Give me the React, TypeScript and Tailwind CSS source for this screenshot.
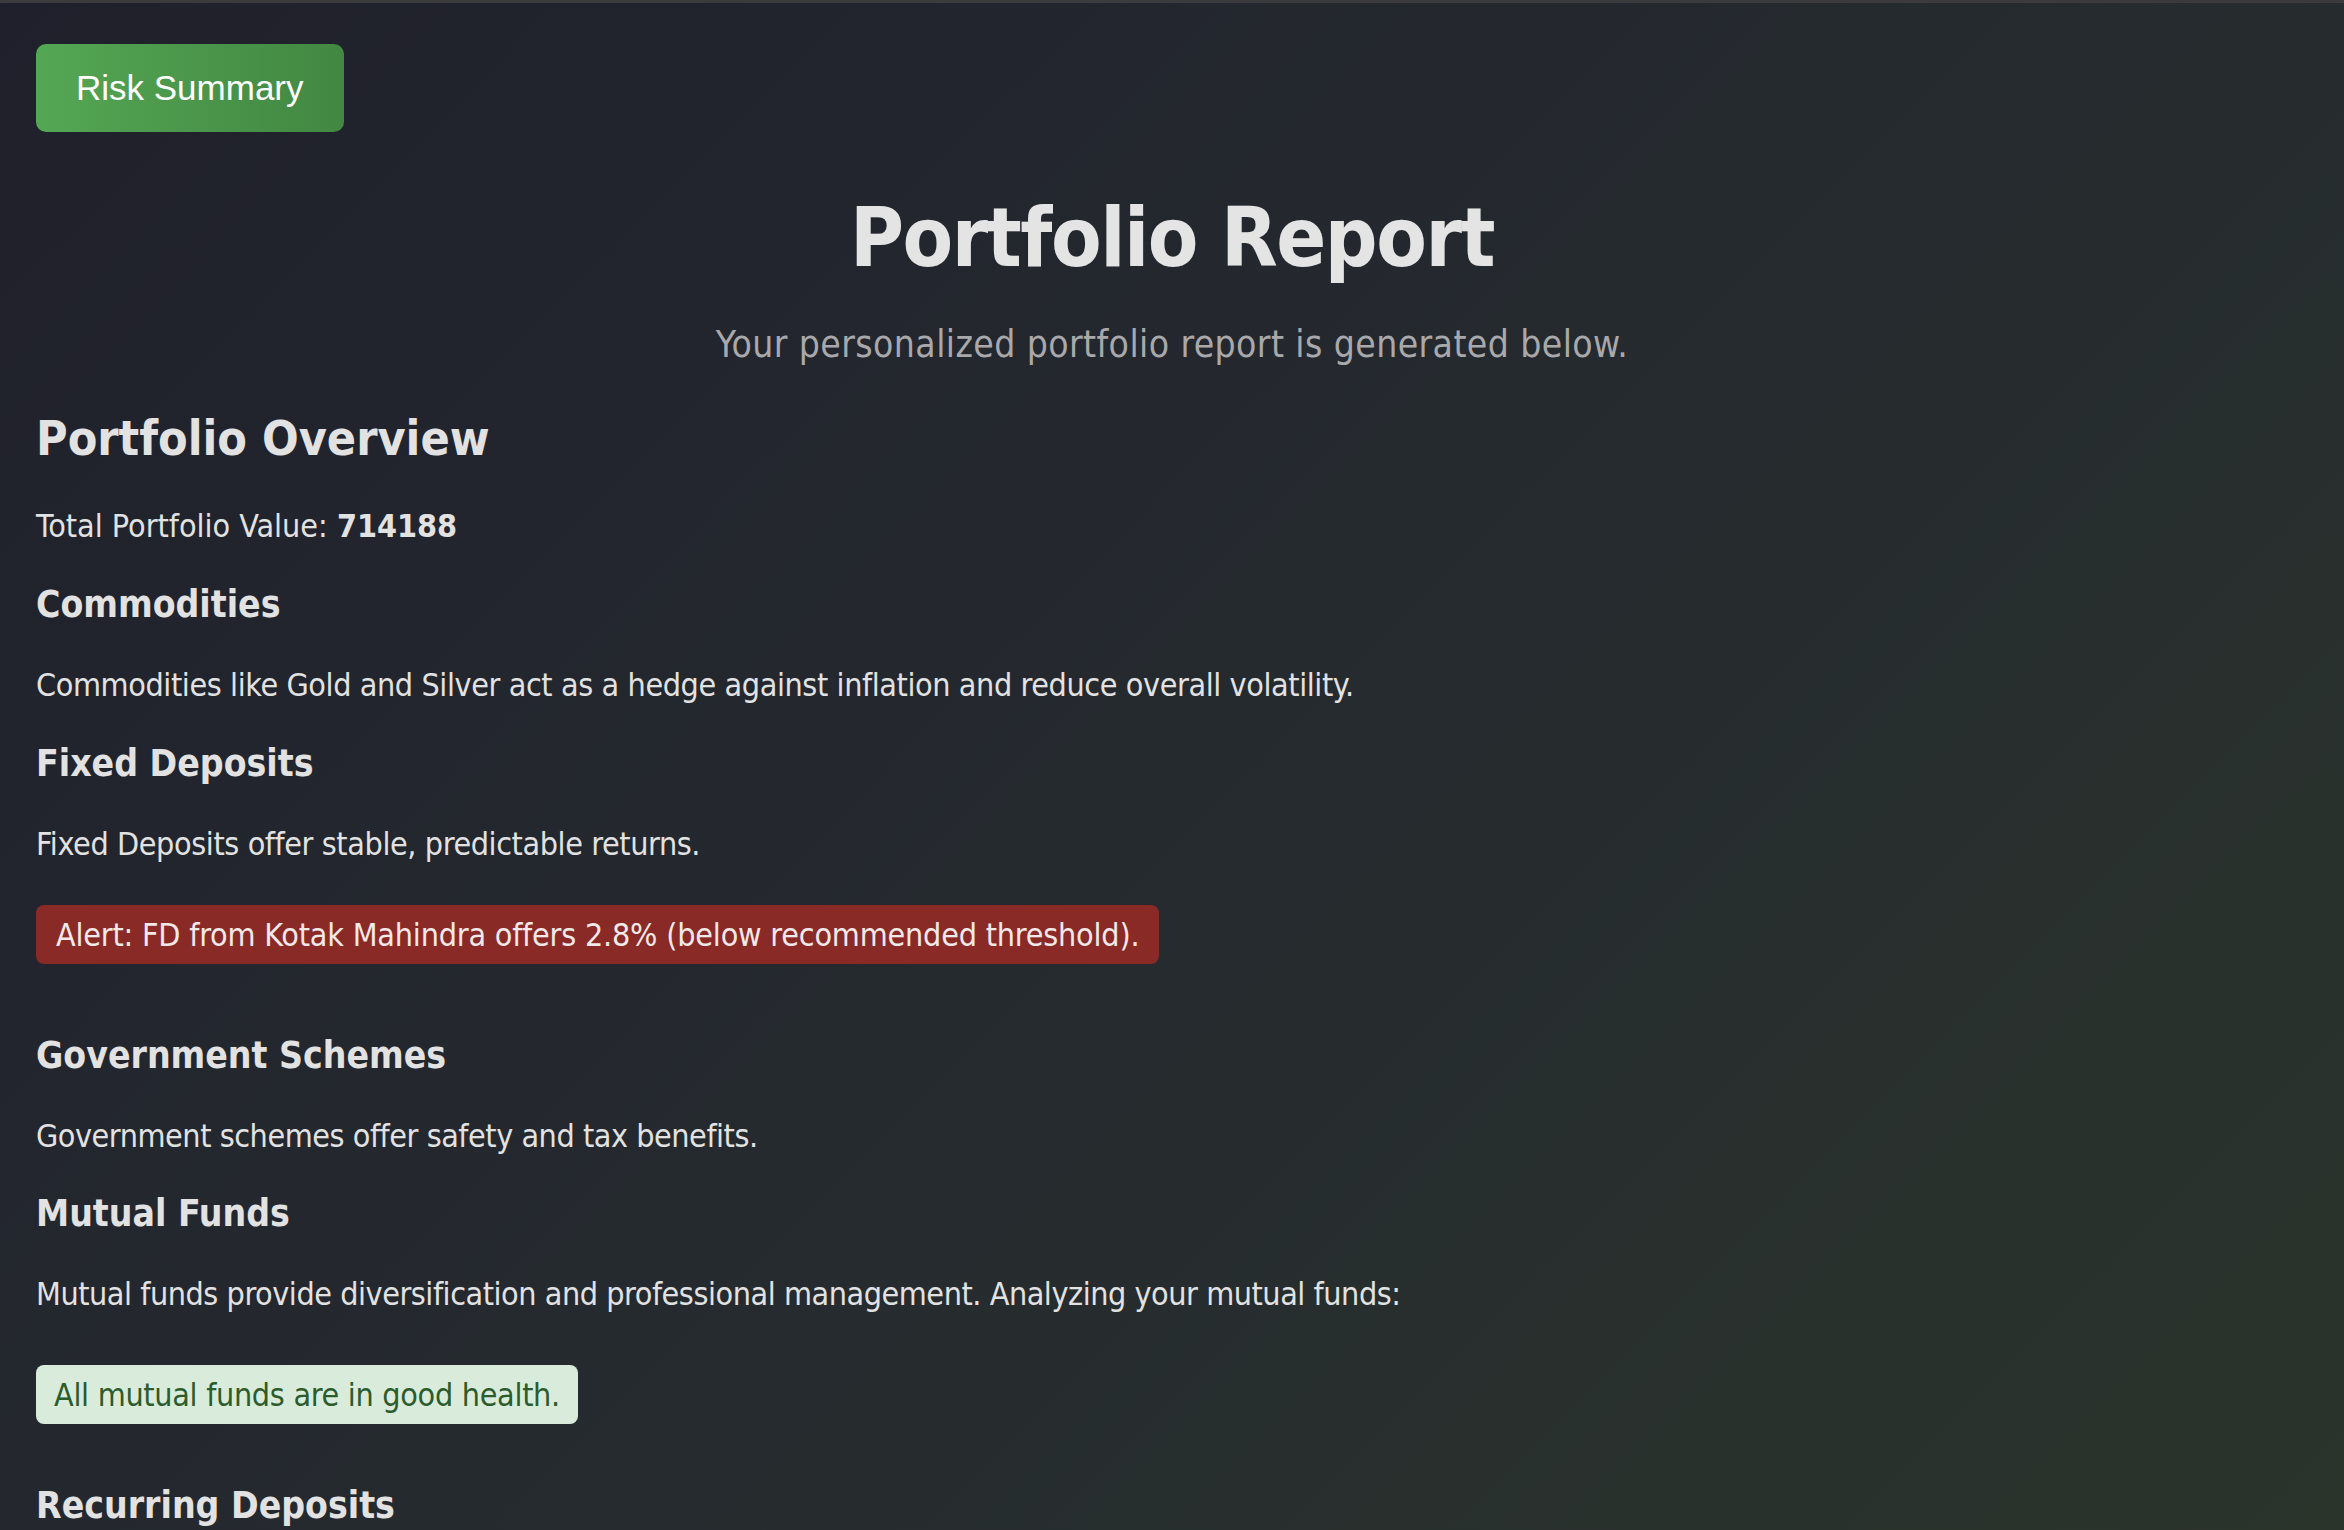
import React from "react";

const sections = [
  { title: "Commodities", text: "Commodities like Gold and Silver act as a hedge against inflation and reduce overall volatility." },
  { title: "Fixed Deposits", text: "Fixed Deposits offer stable, predictable returns." },
];

const App = () => {
  return (
    <div className="min-h-screen w-full border-t-[3px] border-[#3b3b3d] bg-linear-135 from-[#1f202b] via-[#252a2f] to-[#2b342b] px-[36px] pt-[41px] font-['DejaVu_Sans',sans-serif] font-stretch-condensed text-[#e2e2e2]">
      <div className="flex flex-col">
        <div>
          <button className="rounded-[10px] bg-linear-to-r from-[#54a754] to-[#428742] px-[40px] py-[24px] font-['Liberation_Sans',Arial,sans-serif] text-[35px] leading-[40px] text-white font-stretch-normal">
            Risk Summary
          </button>
        </div>

        <h1 className="mt-[58px] text-center text-[82px] leading-[96px] font-bold tracking-[-1.5px] text-[#e4e4e4]">
          Portfolio Report
        </h1>
        <p className="mt-[37px] text-center text-[37px] leading-[44px] tracking-[0.4px] text-[#a9a9ab]">
          Your personalized portfolio report is generated below.
        </p>

        <h2 className="mt-[43px] text-[48px] leading-[56px] font-bold">Portfolio Overview</h2>
        <p className="mt-[40px] text-[32px] leading-[40px]">
          Total Portfolio Value: <span className="font-bold">714188</span>
        </p>

        {sections.map((s, idx) => (
          <React.Fragment key={idx}>
            <h3 className="mt-[37px] text-[37px] leading-[44px] font-bold">{s.title}</h3>
            <p className="mt-[38px] text-[32px] leading-[40px] tracking-[-0.4px]">{s.text}</p>
          </React.Fragment>
        ))}

        <div className="mt-[41px]">
          <div className="inline-block rounded-[8px] bg-[#892a27] px-[20px] pt-[10px] pb-[9px] text-[32px] leading-[40px] tracking-[-0.2px] text-[#f1e8e8]">
            Alert: FD from Kotak Mahindra offers 2.8% (below recommended threshold).
          </div>
        </div>

        <h3 className="mt-[70px] text-[37px] leading-[44px] font-bold">Government Schemes</h3>
        <p className="mt-[38px] text-[32px] leading-[40px] tracking-[-0.45px]">Government schemes offer safety and tax benefits.</p>

        <h3 className="mt-[36px] text-[37px] leading-[44px] font-bold">Mutual Funds</h3>
        <p className="mt-[38px] text-[32px] leading-[40px] tracking-[-0.45px]">
          Mutual funds provide diversification and professional management. Analyzing your mutual funds:
        </p>

        <div className="mt-[51px]">
          <div className="inline-block rounded-[8px] bg-[#d9ecdc] px-[18px] pt-[10px] pb-[9px] text-[32px] leading-[40px] tracking-[-0.3px] text-[#2c5b2c]">
            All mutual funds are in good health.
          </div>
        </div>

        <h3 className="mt-[60px] text-[37px] leading-[44px] font-bold">Recurring Deposits</h3>
      </div>
    </div>
  );
};

export default App;
